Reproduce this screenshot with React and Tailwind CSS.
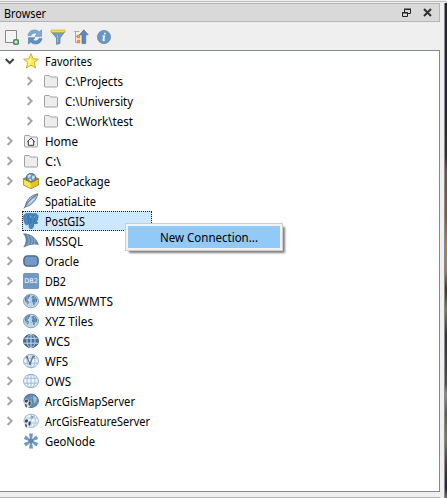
import React from 'react';

const Svg = ({ children, className = 'h-4 w-4' }) => (
  <svg viewBox="0 0 16 16" className={`block shrink-0 ${className}`} fill="none">{children}</svg>
);

const Folder = ({ home }) => (
  <Svg>
    <path d="M1.5 3.2q0-.7.7-.7h4.1l1.3 1.5h6.2q.7 0 .7.7v8.6q0 .7-.7.7H2.2q-.7 0-.7-.7z" fill="#ededed" stroke="#a0a0a0" />
    {home && <path d="M4.3 8.7 8 5.2l3.7 3.5M5.3 8v4.3h5.4V8" fill="#fff" stroke="#383838" />}
  </Svg>
);

const Star = () => (
  <Svg>
    <path d="m8 .7 2.1 5 5.3.5-4.1 3.5 1.3 5.4L8 12.2l-4.6 2.9 1.3-5.4L.6 6.2l5.3-.5z" fill="#fce94f" stroke="#c9a72f" strokeWidth=".9" />
    <path d="M8 3v7L4.7 12.6 6 9.2 3 7l3.7-.4z" fill="#fff58d" />
  </Svg>
);

const GeoPackage = () => (
  <Svg>
    <path d="M.5 5.5 8 3l7.5 2.5V12L8 15.6.5 12z" fill="#d8b620" stroke="#745e10" strokeWidth=".7" />
    <circle cx="8" cy="5" r="4.8" fill="#6d96be" stroke="#355775" strokeWidth=".7" />
    <path d="m4.6 2.4 2-1.2 1.6 1.1-1.2 2-1.8.9zm4.6.6 2-.6.9 2-2 2.1-1.2-1zM6 6l1.4-.6L8.6 8H7z" fill="#c8dff0" />
    <path d="M.7 6.1 7.9 9.4v5.8L.7 11.8z" fill="#fce545" />
    <path d="M15.3 6.1 8.1 9.4v5.8l7.2-3.4z" fill="#e6c322" />
    <path d="M.7 6 8 9.3 15.3 6" stroke="#856b0c" strokeWidth=".8" />
  </Svg>
);

const Feather = () => (
  <Svg>
    <path d="M15 .8C9 2.1 4.4 5.3 3 11l-.8 3C8 12.8 12.7 8.3 15 .8z" fill="#a3c1dc" stroke="#56748f" strokeWidth=".9" />
    <path d="M.8 15.5C4 9.5 8 5.5 13.5 2" stroke="#4b647c" strokeWidth=".9" />
    <path d="m5.5 10.8 5.5-5" stroke="#dcebf7" />
  </Svg>
);

const Elephant = () => (
  <Svg>
    <path d="M4 .8C1.5.8.4 2.5.7 5c.3 2.6 1.3 6.8 2.7 6.8 1 0 1.8-1 2.3-1.5l.6 4.1c.2 1.1 1 1.2 1.8 1.2 1.4 0 2-.8 2.2-2.3l.4-2.7c1.8.2 3.7 0 4.1-.9-.6-.2-1.1-.3-1.7-.3 1.3-2 2.2-5.2 1.8-6.9C14.2.6 11.5.4 9.6 1 7.8.4 5.7.5 4 .8z" fill="#478ac1" stroke="#3570a5" strokeWidth=".9" />
    <path d="M5.5 2.2C4.7 4.5 5 8 5.8 10M9.7 1.5c2 2 2.3 5 .9 8.2M6.3 5h1.6v5.3" stroke="#306b9f" strokeWidth=".9" />
    <path d="M7 4h.8M11.3 4h.8" stroke="#d4e7f7" />
  </Svg>
);

const Sail = () => (
  <Svg>
    <path d="M.6.8c7.2.2 12.2 4 14.8 10.6-4.8-1-9.8.1-14.6 2.6C3.9 9.4 4 5 .6.8z" fill="#6389ae" stroke="#4f7090" strokeWidth=".7" />
    <path d="M4 2c3 3.3 2.9 6.8.5 10M7.5 3c2.2 3 2.2 5.5.5 8.3M11 5.2c1.2 2 1.2 3.8.4 6" stroke="#a9c3db" strokeWidth=".7" />
  </Svg>
);

const Oracle = () => (
  <Svg><rect x=".9" y="2.9" width="14.2" height="10.2" rx="3.6" fill="#729bc8" stroke="#45607e" strokeWidth="1.4" /></Svg>
);

const Db2 = () => (
  <span className="flex h-4 w-4 shrink-0 items-center justify-center rounded-[1.5px] bg-[#6f98c5] font-['DejaVu_Sans',sans-serif] text-[6.5px] leading-none text-white">DB2</span>
);

const EarthGlobe = () => (
  <Svg>
    <ellipse cx="8" cy="8" rx="7.5" ry="6.8" fill="#c3d9ec" stroke="#7c9cba" strokeWidth=".9" />
    <path d="M1.8 5 4 2.8l2.6-.8.8 1-1.5 1.3.3 1.2-1.9 1 .3 1.3 1.5 1-.7 1.9-1 1.3-.9-2.5-1.5-1.6zM9.2 3.4l1.5-.9 2.1 1.4 1.6 2.8-.6 2.4-1.2.2-.9 2.1-1.3.8-.6-2.7-1-1.6.9-2.1-1.4-.9z" fill="#527ba2" />
    <path d="M2.2 5h4M9 5h5M1 9.5h14M8 1.5v13M4.8 2.5q-2.3 5.5 0 11M11.2 2.5q2.3 5.5 0 11" stroke="#9fbdd8" strokeWidth=".55" />
  </Svg>
);

const GridGlobe = ({ dark, v }) => (
  <Svg>
    <ellipse cx="8" cy="8" rx="7.5" ry="6.7" fill={dark ? '#4a7198' : '#f0f7fd'} stroke={dark ? '#3f5e7d' : '#82a7cb'} strokeWidth=".9" />
    <path d="M1.6 5.3h12.8M1 10.2h14M8 1.4v13.2" stroke={dark ? '#d6e8f6' : '#94b6d7'} strokeWidth=".9" />
    <ellipse cx="8" cy="8" rx="4" ry="6.7" stroke={dark ? '#c0d8ec' : '#94b6d7'} strokeWidth=".9" />
    {v && (
      <>
        <path d="m4 4 3 7 3-7.5 2 .3" stroke="#5b6f82" strokeWidth="1.1" />
        <circle cx="4" cy="4" r="1.1" fill="#5b6f82" />
        <circle cx="7" cy="11" r="1.1" fill="#5b6f82" />
        <circle cx="10.2" cy="3.7" r=".9" fill="#5b6f82" />
      </>
    )}
  </Svg>
);

const ArcGlobe = ({ dark }) => (
  <Svg>
    <ellipse cx="8.2" cy="7.8" rx="7.2" ry="6.7" fill={dark ? '#5a84ac' : '#eef6fc'} stroke={dark ? '#42658a' : '#8db0d2'} strokeWidth=".9" />
    <path d="M8 1.5v12M2 5h12.5M2 10h13M10.5 1.8q4 6-.5 12" stroke={dark ? '#7ea2c4' : '#98b9d9'} strokeWidth=".8" />
    {dark && <path d="m10 3 2.5.5 1.5 2.2-.8 3.3-2 1-1-3.4z" fill="#9cbcd9" />}
    {!dark && <path d="m8 2.5 3 1-2.4 3z" fill="#7f97ac" />}
    <path d="M1.3 7.4q2-2.6 4-.8l.6 1.9 2.3-1.1.2 3-1.8 3.6-3.2.6L1 12z" fill="#d5e0e9" />
    <path d="m2 7 2.3-.8.8 1.7-1.4 1.9-2-.9zM6 8.5l1.7.1v2.7L6.2 13l-.9-2zM2.1 10.8l1.7 1v3l-1.4-1.2z" fill="#344859" />
  </Svg>
);

const GeoNode = () => (
  <Svg>
    <path d="M8 2v12M2.8 5l10.4 6M2.8 11l10.4-6" stroke="#6d95ba" strokeWidth="2.3" />
    <path d="M6 .5h4l-.7 4H6.7zM6 15.5h4l-.7-4H6.7zM.7 5.9l2-3.5 3.1 2.6-1.3 2.2zM15.3 10.1l-2 3.5-3.1-2.6 1.3-2.2zM.7 10.1l2 3.5L5.8 11 4.5 8.8zM15.3 5.9l-2-3.5L10.2 5l1.3 2.2z" fill="#7199bd" />
    <circle cx="8" cy="8" r="2.4" fill="#5f89ae" />
  </Svg>
);

const Arrow = ({ open }) => (
  <svg viewBox="0 0 10 10" className="h-[10px] w-[10px] shrink-0" fill="none">
    <path d={open ? 'm.7 3 4 4 4-4' : 'm2.6 1 4 4-4 4'} stroke={open ? '#404040' : '#a6a6a6'} strokeWidth="2" />
  </svg>
);

const rows = [
  { text: 'Favorites', icon: <Star />, open: true, width: 47 },
  { text: 'C:\\Projects', icon: <Folder />, child: true, width: 58 },
  { text: 'C:\\University', icon: <Folder />, child: true, width: 68 },
  { text: 'C:\\Work\\test', icon: <Folder />, child: true, width: 68 },
  { text: 'Home', icon: <Folder home />, width: 33 },
  { text: 'C:\\', icon: <Folder />, width: 16 },
  { text: 'GeoPackage', icon: <GeoPackage />, width: 65 },
  { text: 'SpatiaLite', icon: <Feather />, leaf: true, width: 51 },
  { text: 'PostGIS', icon: <Elephant />, selected: true, width: 40 },
  { text: 'MSSQL', icon: <Sail />, width: 38 },
  { text: 'Oracle', icon: <Oracle />, width: 34 },
  { text: 'DB2', icon: <Db2 />, width: 21 },
  { text: 'WMS/WMTS', icon: <EarthGlobe />, width: 68 },
  { text: 'XYZ Tiles', icon: <EarthGlobe />, width: 48 },
  { text: 'WCS', icon: <GridGlobe dark />, width: 25 },
  { text: 'WFS', icon: <GridGlobe v />, width: 23 },
  { text: 'OWS', icon: <GridGlobe />, width: 26 },
  { text: 'ArcGisMapServer', icon: <ArcGlobe dark />, width: 90 },
  { text: 'ArcGisFeatureServer', icon: <ArcGlobe />, width: 105 },
  { text: 'GeoNode', icon: <GeoNode />, leaf: true, width: 50 },
];

const Label = ({ text, width }) => (
  <svg width={width + 2} height="20" className="block shrink-0 overflow-visible">
    <text x="0" y="14.5" textLength={width} lengthAdjust="spacingAndGlyphs" fill="#000" className="text-[12px]">{text}</text>
  </svg>
);

const Row = ({ text, icon, width, child, open, leaf, selected }) => (
  <div className={`flex h-5 items-center ${child ? 'pl-[25px]' : 'pl-[5px]'}`}>
    <span className="flex w-[17px] shrink-0">{!leaf && <Arrow open={open} />}</span>
    <div className={`flex h-5 items-center gap-[6px] ${selected ? 'w-[130px] bg-[#cce8ff] outline-1 -outline-offset-1 outline-dotted outline-[#222]' : ''} pl-px`}>
      {icon}
      <Label text={text} width={width} />
    </div>
  </div>
);

const Toolbar = () => (
  <div className="flex h-7 items-center gap-[7px] pl-1 pt-0.5">
    <Svg>
      <path d="M1.5 1.5h11v12h-11z" fill="#f4f4f4" stroke="#888" />
      <rect x="9" y="10" width="6" height="6" rx="1.8" fill="#4f8a5c" />
      <path d="M12 11.3v3.4M10.3 13h3.4" stroke="#d5edd9" strokeWidth="1.3" />
    </Svg>
    <Svg>
      <path d="M1 6.6Q2 1 7.6 1q3 0 4.7 2L14.5.8v6.5H8l2-2Q8.9 4 7.4 4 5 4 4 6.6z" fill="#80abd6" stroke="#5583b0" strokeWidth=".6" />
      <path d="M15 9.4Q14 15 8.4 15q-3 0-4.7-2l-2.2 2.2V8.7H8l-2 2Q7.1 12 8.6 12q2.4 0 3.4-2.6z" fill="#5f90c0" stroke="#4878a6" strokeWidth=".6" />
    </Svg>
    <Svg>
      <path d="M1 2.5h14L10 9v5.5l-3.5.8V9z" fill="#739dc3" stroke="#507899" strokeWidth=".7" />
      <path d="M1 1h14v2.5H1z" fill="#f3db49" stroke="#b49c2c" strokeWidth=".5" />
      <path d="M7.5 6v7.5" stroke="#94b8d6" />
    </Svg>
    <Svg>
      <path d="M1 2.5h5.5M2.5 2.5v11H4M2.5 7.5H4" stroke="#aaa" />
      <path d="M4.5 6.5h2v2h-2zM4.5 11.5h2v2h-2z" fill="#fff2d7" stroke="#ef8c20" strokeWidth="1.3" />
      <path d="m10.8.8 4.4 5h-2.5v8.8H9V5.8H6.5z" fill="#5d89b5" stroke="#3f678d" strokeWidth=".6" />
    </Svg>
    <Svg>
      <circle cx="8" cy="8" r="6.6" fill="#6896c4" stroke="#6d8fb0" strokeWidth=".8" />
      <path d="M8.2 3.7h1.7l-.4 1.7H7.8zM6.3 6.6h3l-1 4.1 1.1-.3-.3 1.1q-1 .7-2 .7t-.7-1.1l.9-3.5h-1.2z" fill="#e8f2f9" />
    </Svg>
  </div>
);

export default function App() {
  return (
    <div className="flex h-[498px] w-[447px] flex-col overflow-hidden bg-[#efefef] font-['Noto_Sans','Open_Sans',sans-serif]">
      <div className="flex h-[3px] shrink-0 flex-col justify-center"><div className="h-px bg-[#bdbdbd]" /></div>
      <div className="flex h-[495px]">
        <div className="flex w-[440px] flex-col">
          <header className="flex h-[19px] shrink-0 items-center justify-between border border-l-0 border-[#b5b5b5] bg-[#d9d9d9] pl-1 pr-[7px]">
            <Label text="Browser" width={42} />
            <div className="flex items-center gap-3">
              <svg viewBox="0 0 9 10" className="h-[10px] w-[9px]" fill="none">
                <path d="M2.5 5V1.5h6v4H6M2 1h7M.5 4.5h5v4h-5zM0 5h6" stroke="#222" />
              </svg>
              <svg viewBox="0 0 9 9" className="h-[9px] w-[9px]"><path d="m1 1 7 7M8 1 1 8" stroke="#303030" strokeWidth="2" /></svg>
            </div>
          </header>
          <Toolbar />
          <main className="relative h-[442px] shrink-0 border border-l-0 border-[#82879a] bg-white">
            {rows.map((row) => <Row key={row.text} {...row} />)}
            <div className="absolute left-[125px] top-[172px] flex h-[28px] w-[158px] border border-[#ccc] bg-[#f2f2f2] p-[2px] shadow-[3px_3px_2px_-1px_rgba(0,0,0,0.5)]">
              <div className="flex w-full items-center bg-[#91c9f7] pl-[32px]"><Label text="New Connection..." width={98} /></div>
            </div>
          </main>
          <div className="h-[5px] shrink-0" />
          <div className="h-px bg-[#b5b5b5]" />
        </div>
        <div className="w-1" />
        <div className="w-px bg-[#8d8d8d]" />
        <div className="w-[2px] bg-[linear-gradient(#25252f_0%,#23252f_22%,#34302f_31%,#6b5356_34%,#80574b_43%,#b5794f_49%,#9a7a66_54%,#3c342f_58%,#777b69_62%,#30343a_67%,#4a4e50_77%,#8b9088_79%,#555b52_83%,#777b69_88%,#493d43_93%,#22242e_98%,#697079_100%)]" />
      </div>
    </div>
  );
}
